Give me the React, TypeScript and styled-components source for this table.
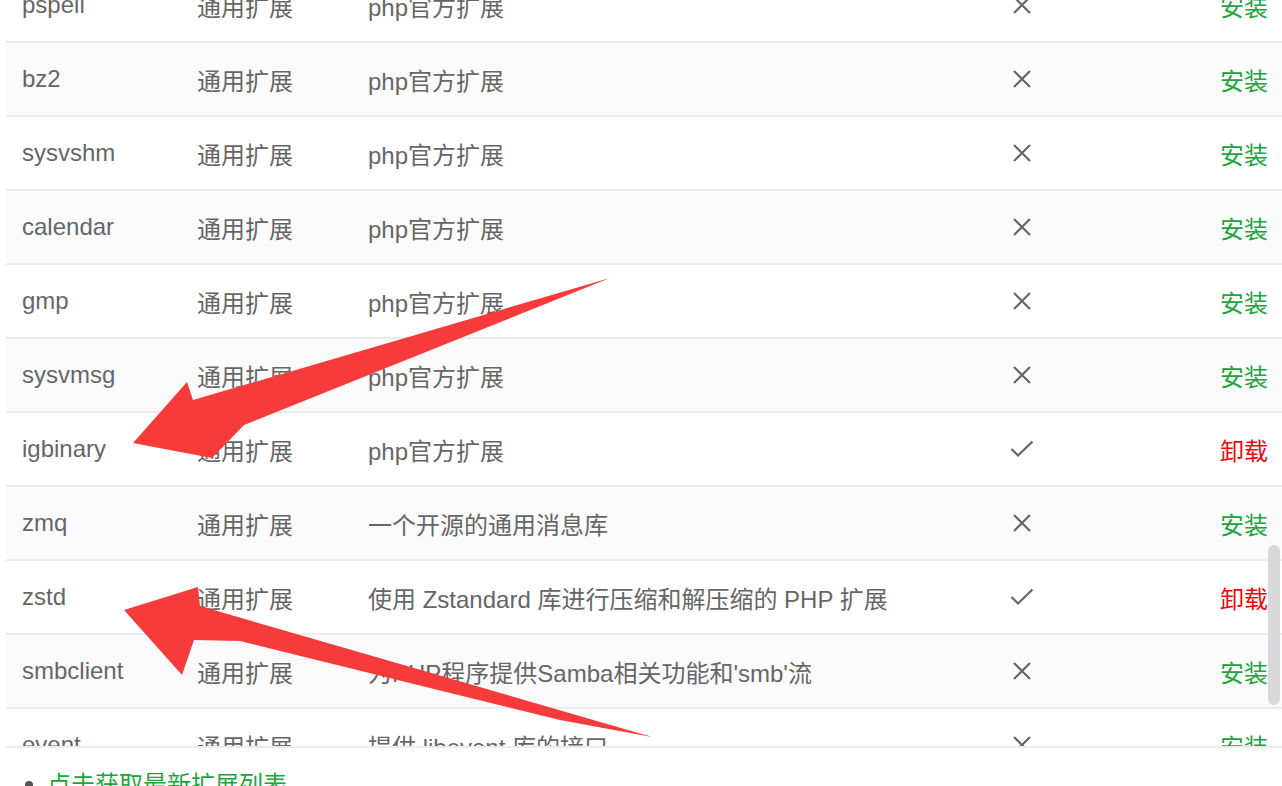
import React from "react";
import styled, { createGlobalStyle } from "styled-components";

const GlobalStyle = createGlobalStyle`
  html, body {
    margin: 0;
    padding: 0;
    background: #fff;
  }
  body {
    font-family: "Liberation Sans", "Noto Sans CJK SC", sans-serif;
  }
`;

const Page = styled.div`
  position: relative;
  width: 1282px;
  height: 786px;
  overflow: hidden;
  box-sizing: border-box;
  padding-left: 6px;
  color: #666;
  font-size: 24px;
`;

const Scroller = styled.div`
  position: relative;
  height: 746px;
  overflow: hidden;
  border-bottom: 2px solid #ebebf0;
`;

const Rows = styled.div<{ $offset: number }>`
  margin-top: ${(p) => -p.$offset}px;
`;

const Row = styled.div<{ $striped: boolean }>`
  display: grid;
  grid-template-columns: 175px 171px 1fr 120px 200px;
  align-items: center;
  height: 72px;
  border-bottom: 2px solid #ebebf0;
  background: ${(p) => (p.$striped ? "#fbfbfc" : "#fff")};
`;

const Cell = styled.div`
  padding: 0 16px;
  white-space: nowrap;
  overflow: hidden;
`;

const StatusCell = styled.div`
  display: flex;
  justify-content: center;
  align-items: center;
`;

const ActionCell = styled.div<{ $installed: boolean }>`
  text-align: right;
  padding-right: 14px;
  color: ${(p) => (p.$installed ? "#e60a0a" : "#20a53a")};
  cursor: pointer;
`;

const ScrollThumb = styled.div`
  position: absolute;
  right: 2px;
  top: 545px;
  width: 12px;
  height: 160px;
  border-radius: 6px;
  background: #d9d9dc;
`;

const LinkRow = styled.div`
  display: flex;
  align-items: center;
  gap: 14px;
  margin-top: 19px;
  padding-left: 19px;
  line-height: 36px;
`;

const Dot = styled.span`
  width: 8px;
  height: 8px;
  border-radius: 50%;
  background: #555;
`;

const Link = styled.a`
  color: #20a53a;
  text-decoration: none;
  cursor: pointer;
`;

const Overlay = styled.svg`
  position: absolute;
  left: 0;
  top: 0;
  pointer-events: none;
`;

type Ext = { name: string; type: string; desc: string; installed?: boolean };

const exts: Ext[] = [
  { name: "pspell", type: "通用扩展", desc: "php官方扩展" },
  { name: "bz2", type: "通用扩展", desc: "php官方扩展" },
  { name: "sysvshm", type: "通用扩展", desc: "php官方扩展" },
  { name: "calendar", type: "通用扩展", desc: "php官方扩展" },
  { name: "gmp", type: "通用扩展", desc: "php官方扩展" },
  { name: "sysvmsg", type: "通用扩展", desc: "php官方扩展" },
  { name: "igbinary", type: "通用扩展", desc: "php官方扩展", installed: true },
  { name: "zmq", type: "通用扩展", desc: "一个开源的通用消息库" },
  {
    name: "zstd",
    type: "通用扩展",
    desc: "使用 Zstandard 库进行压缩和解压缩的 PHP 扩展",
    installed: true,
  },
  { name: "smbclient", type: "通用扩展", desc: "为PHP程序提供Samba相关功能和'smb'流" },
  { name: "event", type: "通用扩展", desc: "提供 libevent 库的接口" },
];

const CrossIcon = () => (
  <svg width="20" height="20" viewBox="0 0 20 20">
    <path d="M2 2 L18 18 M18 2 L2 18" stroke="#666" strokeWidth="2.2" fill="none" />
  </svg>
);

const CheckIcon = () => (
  <svg width="24" height="18" viewBox="0 0 24 18">
    <polyline
      points="1.5,9 8,15.5 22.5,1.5"
      stroke="#666"
      strokeWidth="2.2"
      fill="none"
    />
  </svg>
);

const App: React.FC = () => {
  return (
    <Page>
      <GlobalStyle />
      <Scroller>
        <Rows $offset={31}>
          {exts.map((e, i) => (
            <Row key={e.name} $striped={i % 2 === 1}>
              <Cell>{e.name}</Cell>
              <Cell>{e.type}</Cell>
              <Cell>{e.desc}</Cell>
              <StatusCell>{e.installed ? <CheckIcon /> : <CrossIcon />}</StatusCell>
              <ActionCell $installed={!!e.installed}>
                {e.installed ? "卸载" : "安装"}
              </ActionCell>
            </Row>
          ))}
        </Rows>
        <ScrollThumb />
      </Scroller>
      <LinkRow>
        <Dot />
        <Link>点击获取最新扩展列表</Link>
      </LinkRow>

      {/* 截图标注的两个箭头 */}
      <Overlay width="1282" height="786" viewBox="0 0 1282 786">
        <polygon
          fill="#f73b3b"
          points="133,443 187,382 193,400 610,278 244,425 212,458"
        />
        <polygon
          fill="#f73b3b"
          points="124,610 198,587 200,606 652,737 560,720 240,641 194,640 182,675"
        />
      </Overlay>
    </Page>
  );
};

export default App;
